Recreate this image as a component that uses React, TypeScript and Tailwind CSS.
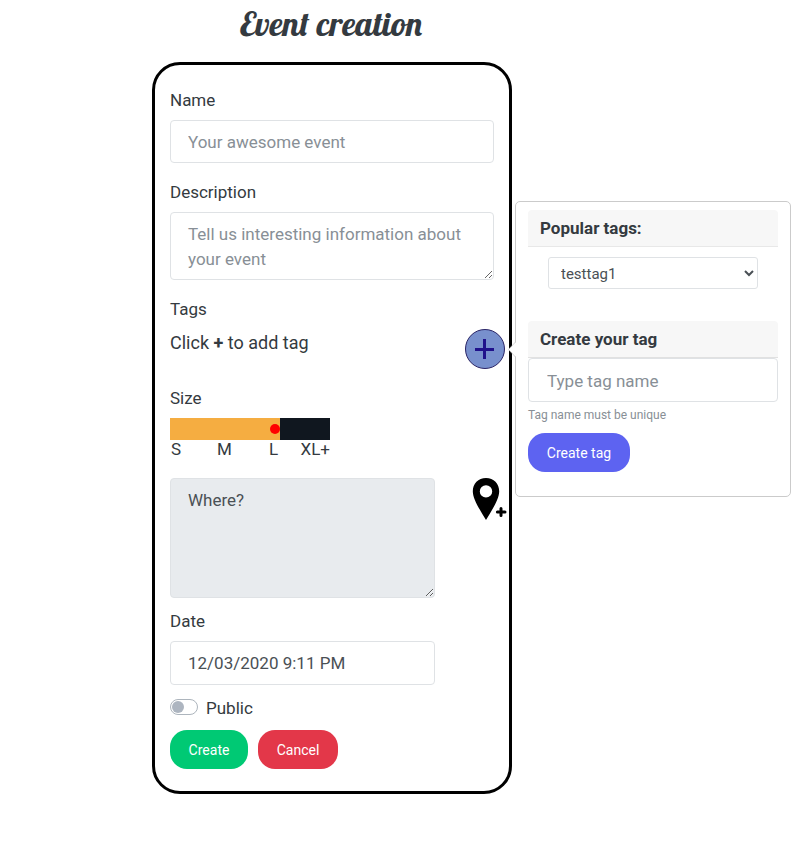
import React from 'react';

const field = 'block w-full rounded-[4px] border border-[#dfe2e5] bg-white px-[17px] text-[17px] leading-[25px] text-[#4a5055] outline-none placeholder:text-[#888f96] placeholder:opacity-100';

function Label({ children }: { children: React.ReactNode }) {
  return <label className="block h-[25px] text-[17px] leading-[25px]">{children}</label>;
}

function SizeMeter() {
  return (
    <div className="mt-[7px] h-[60px] w-40">
      <div className="flex h-[22px] bg-[#10171f]">
        <div className="flex w-[110px] items-center justify-end bg-[#f5ad41]">
          <span className="h-2.5 w-2.5 rounded-full bg-[#ff0000]" />
        </div>
      </div>
      <div className="flex h-5 pl-[1px] text-[17px] leading-[18px]">
        <span className="w-[46px]">S</span>
        <span className="w-[52px]">M</span>
        <span>L</span>
        <span className="ml-auto">XL+</span>
      </div>
    </div>
  );
}

function TagPopover() {
  return (
    <aside className="absolute left-[515px] top-[201px] h-[296px] w-[276px] rounded-[5px] border border-[#cbcbcb] bg-white px-3 pt-2">
      <svg className="absolute -left-[8px] top-[139px]" width="9" height="17" viewBox="0 0 9 17">
        <path d="M9 0L0.5 8.5L9 17Z" fill="white" />
        <path d="M7.5 1L.5 8.5L7.5 16" fill="none" stroke="#cbcbcb" strokeWidth=".8" />
      </svg>
      <h3 className="h-[37px] rounded-t-[4px] border-b border-[#e8e8e8] bg-[#f7f7f7] px-3 text-[17px] font-bold leading-[37px]">Popular tags:</h3>
      <div className="mx-5 mt-[10px]">
        <select defaultValue="testtag1" className="block h-8 w-[210px] rounded-[3px] border border-[#dfe2e5] bg-white pl-2 pt-px text-[15px] text-[#4a5055]">
          <option>testtag1</option>
        </select>
      </div>
      <h3 className="mt-8 h-[37px] rounded-t-[4px] border-b border-[#e1e1e1] bg-[#f7f7f7] px-3 text-[17px] font-bold leading-[37px]">Create your tag</h3>
      <input className={`${field} h-[44px] pl-[18px] pt-[2px]`} placeholder="Type tag name" />
      <p className="mt-[3px] h-[19px] text-[12px] leading-[20px] text-[#888f96]">Tag name must be unique</p>
      <button className="mt-[9px] block h-[39px] w-[102px] rounded-[17px] bg-[#5d63f1] pt-[2px] text-[14px] text-white">Create tag</button>
    </aside>
  );
}

export default function App() {
  return (
    <main className="relative h-[867px] w-full overflow-hidden bg-white font-['Roboto',sans-serif] text-[#343a40]">
      <h1 className="ml-[240px] h-[62px] pt-[2px] font-['Lobster','Liberation_Serif',serif] text-[34px] font-normal leading-[44px] whitespace-nowrap">
        Event creation
      </h1>
      <form className="ml-[152px] h-[732px] w-[360px] rounded-[28px] border-[3px] border-black px-[15px] pt-[23px]">
        <Label>Name</Label>
        <input className={`${field} mt-[7px] h-[43px]`} placeholder="Your awesome event" />
        <div className="mt-[17px]"><Label>Description</Label></div>
        <textarea className={`${field} mt-[7px] h-[68px] resize-y overflow-hidden pt-[9px]`} placeholder="Tell us interesting information about your event" />
        <div className="mt-[17px]"><Label>Tags</Label></div>
        <div className="-mr-[11px] mt-[7px] flex h-[57px] items-start justify-between">
          <p className="text-[18px] leading-[27px]">Click <b>+</b> to add tag</p>
          <button type="button" aria-label="Add tag" className="flex h-10 w-10 items-center justify-center rounded-full border border-[#292365] bg-[#7890cd]">
            <svg width="20" height="20" viewBox="0 0 20 20"><path d="M9.5 0V20M0 10.5H19" stroke="#20118b" strokeWidth="3" /></svg>
          </button>
        </div>
        <Label>Size</Label>
        <SizeMeter />
        <div className="-mr-[13px] flex h-[120px] items-start justify-between">
          <textarea defaultValue="Where?" className="block h-[120px] w-[265px] resize-y rounded-[4px] border border-[#dfe2e5] bg-[#e8ebee] px-[17px] pt-[9px] text-[17px] leading-[25px] text-[#4a5055]" />
          <svg width="35" height="43" viewBox="0 0 35 43">
            <path fillRule="evenodd" d="M14 0C6.2 0 .8 5.7.8 13.2c0 8 6.8 18 13.2 28.8C20.4 31.2 27.2 21.2 27.2 13.2 27.2 5.7 21.8 0 14 0Zm0 7.2a6.2 6.2 0 1 1 0 12.4 6.2 6.2 0 0 1 0-12.4Z" />
            <path d="M29 30.4v7.2M25.4 34h7.6" stroke="black" strokeWidth="3" strokeLinecap="round" />
          </svg>
        </div>
        <div className="mt-[11px]"><Label>Date</Label></div>
        <div className="mt-[7px] w-[265px]">
          <input className={`${field} h-[44px] pb-px`} defaultValue="12/03/2020 9:11 PM" />
        </div>
        <div className="mt-[10px] flex h-[25px] gap-2 text-[17px] leading-[26px]">
          <span className="mt-1 flex h-4 w-7 items-center rounded-full border border-[#adb5bd] pl-[1px]">
            <span className="h-3 w-3 rounded-full bg-[#adb5c0]" />
          </span>
          <span>Public</span>
        </div>
        <div className="mt-[10px] flex gap-[10px] text-[14px] text-white">
          <button type="button" className="h-[39px] w-[78px] rounded-[17px] bg-[#00c974] pt-[2px]">Create</button>
          <button type="button" className="h-[39px] w-20 rounded-[17px] bg-[#e33749] pt-[2px]">Cancel</button>
        </div>
      </form>
      <TagPopover />
    </main>
  );
}
